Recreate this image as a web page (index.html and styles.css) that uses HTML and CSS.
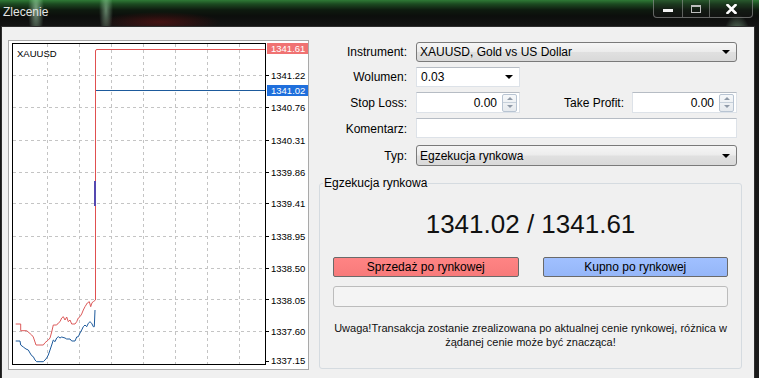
FILE: index.html
```html
<!DOCTYPE html>
<html lang="pl">
<head>
<meta charset="utf-8">
<title>Zlecenie</title>
<link rel="stylesheet" href="styles.css">
</head>
<body>
<div class="window">
  <div class="titlebar">
    <span class="title">Zlecenie</span>
    <div class="caption">
      <span class="cbtn cmin"><span class="min-bar"></span></span>
      <span class="cbtn cmax"><span class="max-box"></span></span>
      <span class="cbtn cclose">
        <svg width="11" height="10" viewBox="0 0 11 10"><path d="M1.5 1 L9.5 9 M9.5 1 L1.5 9" stroke="#fff" stroke-width="2.6" stroke-linecap="square"/></svg>
      </span>
    </div>
  </div>
  <div class="frame">
    <div class="chart">
      <svg class="chart-svg" width="299" height="328" viewBox="9 41 299 328">
        <rect x="9" y="41" width="299" height="328" fill="#fff"/>
        <g stroke="#c4c4c4" stroke-width="1" stroke-dasharray="3 3">
          <path d="M47.5 44 V364 M79.5 44 V364 M111.5 44 V364 M143.5 44 V364 M175.5 44 V364 M207.5 44 V364 M239.5 44 V364"/>
          <path d="M13 75.5 H265 M13 107.5 H265 M13 140.5 H265 M13 172.5 H265 M13 203.5 H265 M13 236.5 H265 M13 268.5 H265 M13 299.5 H265 M13 331.5 H265"/>
        </g>
        <g stroke="#000" stroke-width="1">
          <path d="M265 75.5 H269 M265 107.5 H269 M265 140.5 H269 M265 172.5 H269 M265 203.5 H269 M265 236.5 H269 M265 268.5 H269 M265 299.5 H269 M265 331.5 H269 M265 361.5 H269"/>
        </g>
        <polyline fill="none" stroke="#dc5a5a" stroke-width="1" points="15.7,324 20.7,324 20.7,330.7 26.7,330.7 31.7,335 33.3,337 35,342 36,345 43.3,345 45,342.7 48.3,340 50,338 51.7,332 53.3,325 56.7,325 58.3,323 60,321.7 61.7,318 63.3,316.7 65,320 66.7,317 68.3,321.7 70,320 71.7,324 75,324 76.7,321.7 78.3,318 80,316.7 81.7,314 83.3,310 85,306.7 87.3,303 89.3,301.7 90.7,306.7 92,302.7 93.3,301.7 95.5,300"/>
        <path d="M95.5 300 V51 Q95.5 49.5 97 49.5 H265" fill="none" stroke="#e05050" stroke-width="1"/>
        <polyline fill="none" stroke="#1d5a9c" stroke-width="1" points="15.7,341 20,341 20.7,345 23.3,347 26,349 28.3,350 30,353 31.7,355.7 33.3,356.7 35,360 36.7,361.7 43.3,361.7 45,360 46.7,358 48.3,355 50,350 51.7,345 53.3,340 55,341.7 56.7,338 58.3,336.7 60,338 61.7,337 65,338 66.7,339 70,339 71.7,341 75,341 76.7,337 78.3,336.7 80,333 81.7,330 83.3,326.7 85,325 86.7,326.7 88.3,323.3 90,321.7 91.7,323.3 93.3,326.7 94.3,326.7 95,310"/>
        <path d="M96 90.5 H265" stroke="#1d5a9c" stroke-width="1"/>
        <path d="M95 181 V206" stroke="#5548b0" stroke-width="2"/>
        <rect x="12.5" y="43.5" width="253" height="321" fill="none" stroke="#000" stroke-width="1"/>
        <rect x="267" y="43" width="41" height="11" fill="#f07272"/>
        <rect x="267" y="85" width="41" height="11" fill="#1f6fdc"/>
        <g class="axis-text">
          <text x="17" y="56.5">XAUUSD</text>
          <text x="271" y="51.8" class="inv">1341.61</text>
          <text x="271" y="79">1341.22</text>
          <text x="271" y="93.8" class="inv">1341.02</text>
          <text x="271" y="111">1340.76</text>
          <text x="271" y="144">1340.31</text>
          <text x="271" y="176">1339.86</text>
          <text x="271" y="207">1339.41</text>
          <text x="271" y="240">1338.95</text>
          <text x="271" y="271.5">1338.50</text>
          <text x="271" y="303.5">1338.05</text>
          <text x="271" y="335">1337.60</text>
          <text x="271" y="363.5">1337.15</text>
        </g>
      </svg>
    </div>
    <div class="form">
      <div class="grid">
        <label class="lbl">Instrument:</label>
        <div class="select first"><span>XAUUSD, Gold vs US Dollar</span><span class="arrow"></span></div>

        <label class="lbl">Wolumen:</label>
        <div class="combo"><span>0.03</span><span class="arrow"></span></div>

        <label class="lbl">Stop Loss:</label>
        <div class="sl-row">
          <div class="num"><span class="val">0.00</span><span class="spin"><span class="up"></span><span class="down"></span></span></div>
          <label class="lbl tp-lbl">Take Profit:</label>
          <div class="num tp"><span class="val">0.00</span><span class="spin"><span class="up"></span><span class="down"></span></span></div>
        </div>

        <label class="lbl">Komentarz:</label>
        <div class="text-input"></div>

        <label class="lbl">Typ:</label>
        <div class="select"><span>Egzekucja rynkowa</span><span class="arrow"></span></div>
      </div>

      <fieldset class="group">
        <legend>Egzekucja rynkowa</legend>
        <div class="price">1341.02 / 1341.61</div>
        <div class="buttons">
          <button class="btn sell">Sprzedaż po rynkowej</button>
          <button class="btn buy">Kupno po rynkowej</button>
        </div>
        <div class="progress"></div>
        <p class="warning">Uwaga!Transakcja zostanie zrealizowana po aktualnej cenie rynkowej, różnica w<br>żądanej cenie może być znacząca!</p>
      </fieldset>
    </div>
  </div>
</div>
</body>
</html>
```

FILE: styles.css
```css
* { box-sizing: border-box; }
html, body { margin: 0; padding: 0; }
body {
  width: 759px;
  height: 378px;
  overflow: hidden;
  background: #0b0d0b;
  font-family: "Liberation Sans", Arial, sans-serif;
  font-size: 12px;
  color: #000;
}
.window {
  display: flex;
  flex-direction: column;
  height: 378px;
  background:
    radial-gradient(ellipse 8px 30px at 36px 10px, rgba(200,255,210,0.55), rgba(200,255,210,0) 100%),
    radial-gradient(ellipse 7px 28px at 106px 10px, rgba(200,255,210,0.45), rgba(200,255,210,0) 100%),
    radial-gradient(ellipse 14px 26px at 737px 40px, rgba(190,255,205,0.6), rgba(190,255,205,0) 100%),
    radial-gradient(ellipse 60px 10px at 160px 22px, rgba(120,20,20,0.5), rgba(120,20,20,0) 100%),
    linear-gradient(#2f7a36 0px, #1c4a21 4px, #0e1a0f 10px, #0c0e0c 16px, #141414 26px, #1a1a1a 100%);
}
.titlebar {
  height: 26px;
  flex: none;
  display: flex;
  align-items: flex-start;
}
.title {
  color: #e4e4e4;
  padding: 5px 0 0 3px;
  line-height: 15px;
  font-size: 12px;
}
.caption {
  margin-left: auto;
  margin-right: 6px;
  display: flex;
  height: 18px;
  border: 1px solid rgba(170,170,170,0.55);
  border-top: 0;
  border-radius: 0 0 4px 4px;
  background: rgba(30,30,30,0.35);
}
.cbtn {
  display: flex;
  align-items: center;
  justify-content: center;
  height: 100%;
}
.cmin { width: 29px; border-right: 1px solid rgba(170,170,170,0.5); }
.cmax { width: 27px; border-right: 1px solid rgba(170,170,170,0.5); }
.cclose { width: 42px; }
.min-bar {
  display: block;
  width: 10px;
  height: 3px;
  margin-top: 4px;
  background: #f2f2f2;
}
.max-box {
  display: block;
  width: 10px;
  height: 8px;
  border: 1px solid #bdbdbd;
  border-top-width: 2px;
}
.frame {
  flex: 1;
  display: flex;
  align-items: flex-start;
  gap: 10px;
  width: 754px;
  margin: 0 0 0 1px;
  border: 1px solid #2e2e2e;
  border-bottom: 0;
  background: #f0f0f0;
  padding: 13px 0 0 6px;
}
.chart {
  width: 301px;
  height: 330px;
  border: 1px solid #a9a9a9;
  background: #fff;
  flex: none;
}
.chart-svg { display: block; }
.axis-text text {
  font-family: "Liberation Sans", Arial, sans-serif;
  font-size: 9.5px;
  fill: #000;
}
.axis-text text.inv { fill: #fff; }
.form {
  flex: none;
  width: 423px;
  min-width: 0;
  display: flex;
  flex-direction: column;
}
.grid {
  display: grid;
  grid-template-columns: 88px 321px;
  grid-template-rows: 20px 20px 21px 22px 21px;
  column-gap: 9px;
  row-gap: 5px;
  margin-top: 2px;
}
.lbl {
  text-align: right;
  align-self: center;
  line-height: 14px;
  white-space: nowrap;
}
.select {
  display: flex;
  align-items: center;
  height: 21px;
  padding: 0 6px 0 3px;
  border: 1px solid #7a7a7a;
  border-radius: 3px;
  background: linear-gradient(#f6f6f6, #ececec 48%, #e0e0e0 52%, #d9d9d9);
}
.select.first { height: 20px; }
.arrow {
  margin-left: auto;
  width: 0;
  height: 0;
  border-left: 4px solid transparent;
  border-right: 4px solid transparent;
  border-top: 4px solid #000;
}
.combo {
  display: flex;
  align-items: center;
  width: 104px;
  height: 20px;
  padding: 0 6px 0 4px;
  background: #fff;
  border: 1px solid #dde2e8;
  border-top-color: #b6bcc4;
}
.sl-row {
  display: flex;
  align-items: center;
  min-width: 0;
}
.num {
  flex: none;
  display: flex;
  align-items: center;
  justify-content: flex-end;
  width: 104px;
  height: 21px;
  padding: 1px 2px 1px 4px;
  background: #fff;
  border: 1px solid #dde2e8;
  border-top-color: #b6bcc4;
}
.num .val { margin-right: 5px; }
.tp { width: 105px; }
.tp-lbl {
  flex: 1;
  margin-right: 8px;
}
.spin {
  display: flex;
  flex-direction: column;
  width: 15px;
  height: 18px;
  border: 1px solid #b8c4d2;
  border-radius: 2px;
  background: linear-gradient(#f6f8fa, #e6eaee);
}
.spin .up, .spin .down {
  flex: 1;
  display: flex;
  align-items: center;
  justify-content: center;
}
.spin .up { border-bottom: 1px solid #c6d0da; }
.spin .up::after {
  content: "";
  border-left: 3px solid transparent;
  border-right: 3px solid transparent;
  border-bottom: 3px solid #8f9aa8;
}
.spin .down::after {
  content: "";
  border-left: 3px solid transparent;
  border-right: 3px solid transparent;
  border-top: 3px solid #8f9aa8;
}
.text-input {
  height: 20px;
  align-self: start;
  background: #fff;
  border: 1px solid #dde2e8;
  border-top-color: #b6bcc4;
}
.group {
  margin: 10px 0 0 0;
  padding: 19px 13px 19px 13px;
  border: 1px solid #d5dbe0;
  border-radius: 3px;
  min-width: 0;
  width: 423px;
}
.group legend {
  margin-left: -10px;
  padding: 0 1px;
  line-height: 14px;
}
.price {
  text-align: center;
  font-size: 26px;
  line-height: 30px;
  color: #111;
}
.buttons {
  display: flex;
  gap: 24px;
  margin-top: 18px;
}
.btn {
  flex: 1;
  height: 20px;
  padding: 0;
  font-family: inherit;
  font-size: 12px;
  color: #000;
  border: 1px solid #6a6a6a;
  border-radius: 2px;
}
.sell { background: linear-gradient(#ff8484, #f77a7a); }
.buy { background: linear-gradient(#a0c0ff, #95b6f8); }
.progress {
  height: 21px;
  margin-top: 9px;
  border: 1px solid #bcbcbc;
  border-radius: 3px;
  background: #f4f4f4;
}
.warning {
  margin: 14px 0 0 0;
  text-align: center;
  font-size: 11px;
  line-height: 14px;
  white-space: nowrap;
  color: #111;
}
```
